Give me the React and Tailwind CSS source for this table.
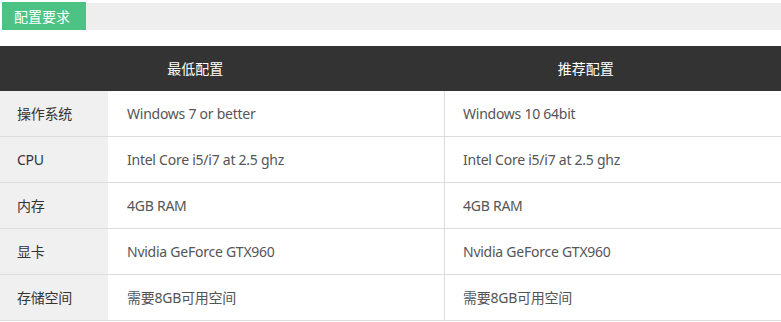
const rows = [
  ['操作系统', 'Windows 7 or better', 'Windows 10 64bit'],
  ['CPU', 'Intel Core i5/i7 at 2.5 ghz', 'Intel Core i5/i7 at 2.5 ghz'],
  ['内存', '4GB RAM', '4GB RAM'],
  ['显卡', 'Nvidia GeForce GTX960', 'Nvidia GeForce GTX960'],
  ['存储空间', '需要8GB可用空间', '需要8GB可用空间'],
];

export default function App() {
  return (
    <div
      className="w-[781px] h-[322px] bg-white overflow-hidden text-[14px]"
      style={{ fontFamily: '"Microsoft YaHei", "Noto Sans", "Noto Sans CJK SC", sans-serif' }}
    >
      {/* section title */}
      <div className="flex items-center pt-[2px]">
        <div className="ml-[2px] w-[84px] h-[28px] bg-[#4cc285] text-white flex items-center pl-[12px]">
          配置要求
        </div>
        <div className="flex-1 h-[27px] mt-[1px] bg-[#eeeeee]"></div>
      </div>

      {/* table */}
      <div className="mt-[16px]">
        <div className="grid grid-cols-2 h-[45px] bg-[#333333] text-white">
          <div className="flex items-center justify-center">最低配置</div>
          <div className="flex items-center justify-center">推荐配置</div>
        </div>
        {rows.map(([label, min, rec]) => (
          <div key={label} className="flex h-[46px] border-b border-[#dddddd] tracking-[-0.25px]">
            <div className="w-[108px] bg-[#f0f0f0] text-[#333] flex items-center pl-[17px]">{label}</div>
            <div className="w-[337px] border-r border-[#dddddd] text-[#555] flex items-center pl-[19px]">{min}</div>
            <div className="flex-1 text-[#555] flex items-center pl-[18px]">{rec}</div>
          </div>
        ))}
      </div>
    </div>
  );
}
